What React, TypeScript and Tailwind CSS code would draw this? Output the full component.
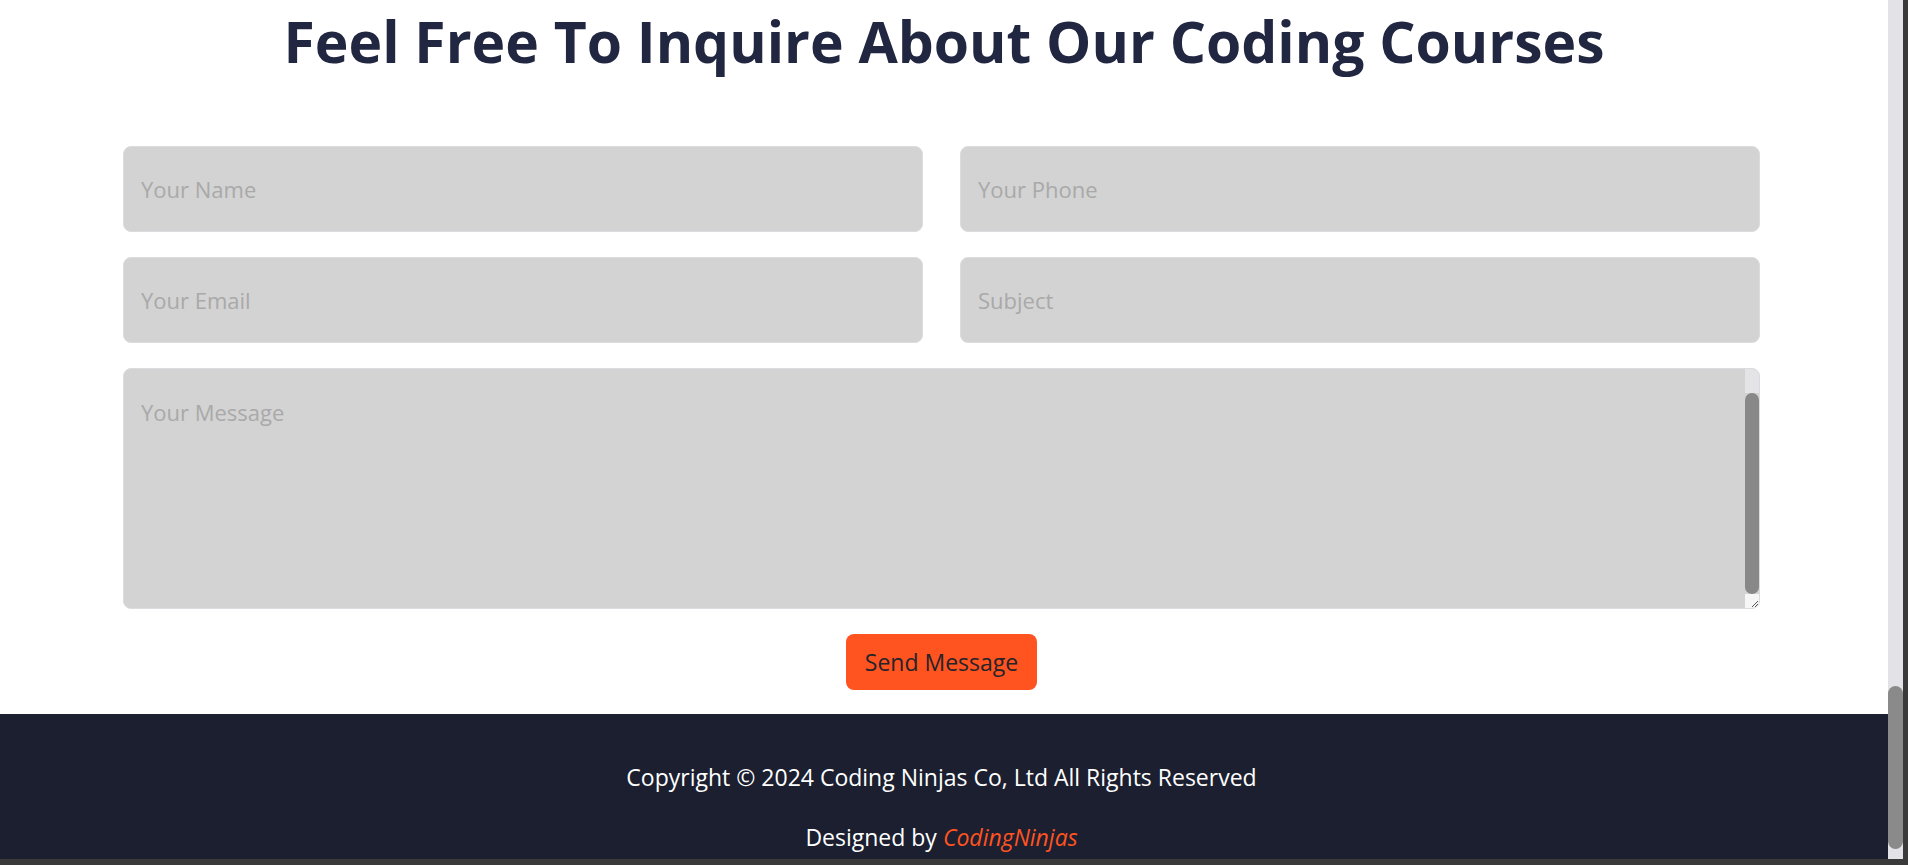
import React from "react";

const font = { fontFamily: '"Open Sans", "Noto Sans", sans-serif' };

function Field({ placeholder }: { placeholder: string }) {
  return (
    <input
      type="text"
      placeholder={placeholder}
      className="h-[86px] w-full rounded-[8px] border border-[#dcdce0] bg-[#d3d3d3] pl-[17px] pr-[17px] text-[22px] text-[#222] outline-none placeholder:text-[#a9a9a9]"
    />
  );
}

export default function App() {
  return (
    <div
      className="flex h-[865px] w-[1908px] flex-col overflow-hidden bg-[#3a3a3a]"
      style={font}
    >
      <div className="flex min-h-0 flex-1">
        {/* page */}
        <div className="flex w-[1888px] flex-col bg-white">
          <h1 className="mt-[5px] text-center text-[57px] font-bold leading-[72px] text-[#222741]">
            Feel Free To Inquire About Our Coding Courses
          </h1>

          <form className="ml-[123px] mt-[69px] flex w-[1637px] flex-col">
            <div className="grid grid-cols-2 gap-x-[37px] gap-y-[25px]">
              <Field placeholder="Your Name" />
              <Field placeholder="Your Phone" />
              <Field placeholder="Your Email" />
              <Field placeholder="Subject" />
            </div>

            <div className="mt-[25px] flex h-[241px] overflow-hidden rounded-[8px] border border-[#dcdce0] bg-[#d3d3d3]">
              <textarea
                placeholder="Your Message"
                className="h-full flex-1 resize-none bg-transparent pl-[17px] pr-[17px] pt-[27px] text-[22px] leading-[32px] text-[#222] outline-none placeholder:text-[#a9a9a9]"
              />
              <div className="flex w-[14px] flex-col">
                <div className="h-[24px] rounded-tr-[6px] bg-[#e4e4e6]" />
                <div className="h-[201px] rounded-full bg-[#888888]" />
                <div className="flex flex-1 items-end justify-end bg-[#f6f6f6]">
                  <svg width="10" height="10" viewBox="0 0 10 10">
                    <line x1="3" y1="9" x2="9" y2="3" stroke="#555" strokeWidth="1" />
                    <line x1="6" y1="9" x2="9" y2="6" stroke="#555" strokeWidth="1" />
                  </svg>
                </div>
              </div>
            </div>

            <div className="mt-[25px] flex justify-center">
              <button
                type="button"
                className="h-[56px] rounded-[8px] bg-[#ff5320] px-[19px] text-[23px] text-[#24242a]"
              >
                Send Message
              </button>
            </div>
          </form>

          <footer className="mt-[24px] flex h-[145px] flex-col items-center bg-[#1b1f30] pr-[5px] pt-[47px] text-[23px] leading-[32px] text-white">
            <p>Copyright © 2024 Coding Ninjas Co, Ltd All Rights Reserved</p>
            <p className="mt-[28px]">
              Designed by <span className="italic text-[#ff5320]">CodingNinjas</span>
            </p>
          </footer>
        </div>

        {/* page scrollbar */}
        <div className="flex w-[15px] flex-col bg-[#e3e2e6]">
          <div className="h-[686px]" />
          <div className="h-[163px] rounded-full bg-[#8a8a8a]" />
          <div className="flex-1 rounded-br-[6px]" />
        </div>
        <div className="w-[5px] bg-[#3a3a3a]" />
      </div>
      <div className="h-[6px]" />
    </div>
  );
}
